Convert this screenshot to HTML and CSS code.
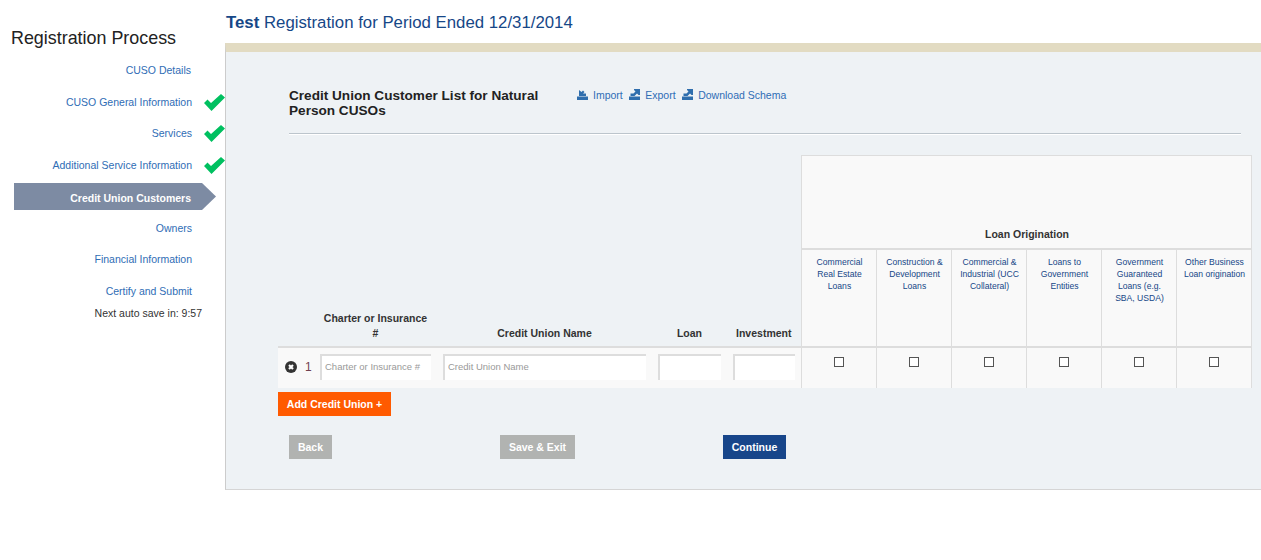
FILE: index.html
```html
<!DOCTYPE html>
<html lang="en">
<head>
    <meta charset="UTF-8">
    <title>Credit Union Customers</title>
    <link rel="stylesheet" href="styles.css">
</head>
<body>
    <div class="page">
        <div class="sidebar">
            <h2 class="side-title">Registration Process</h2>
            <ul class="steps">
                <li class="step step-first"><a href="#">CUSO Details</a></li>
                <li class="step done"><a href="#">CUSO General Information</a>
                    <svg class="check" viewBox="0 0 21 17"><path d="M0 9 L3.500 5.500 L7 9 L17 0 L21 3.500 L7.500 17 Z"/></svg></li>
                <li class="step done"><a href="#">Services</a>
                    <svg class="check" viewBox="0 0 21 17"><path d="M0 9 L3.500 5.500 L7 9 L17 0 L21 3.500 L7.500 17 Z"/></svg></li>
                <li class="step done"><a href="#">Additional Service Information</a>
                    <svg class="check" viewBox="0 0 21 17"><path d="M0 9 L3.500 5.500 L7 9 L17 0 L21 3.500 L7.500 17 Z"/></svg></li>
                <li class="step active"><a href="#">Credit Union Customers</a></li>
                <li class="step"><a href="#">Owners</a></li>
                <li class="step"><a href="#">Financial Information</a></li>
                <li class="step"><a href="#">Certify and Submit</a></li>
            </ul>
            <div class="autosave">Next auto save in: 9:57</div>
        </div>

        <div class="main">
            <h1 class="page-title"><b>Test</b> Registration for Period Ended 12/31/2014</h1>
            <div class="panel">
                <div class="panel-head">
                    <h3 class="list-title">Credit Union Customer List for Natural Person CUSOs</h3>
                    <div class="tools">
                        <a href="#"><svg class="tool-icon" viewBox="0 0 11 11"><path d="M0 7.500h11V11H0z"/><path d="M2 7V1l2.500 2L6 1.500 7.500 3 6 4.500h3V7z"/></svg>Import</a>
                        <a href="#"><svg class="tool-icon" viewBox="0 0 11 11"><path d="M0 7.500h11V11H0z"/><path d="M1.500 7V4.500h3L6.500 2.500 5 1V0h6v6H9.500L8 4.500 5.500 7z"/></svg>Export</a>
                        <a href="#"><svg class="tool-icon" viewBox="0 0 11 11"><path d="M0 7.500h11V11H0z"/><path d="M1.500 7V4.500h3L6.500 2.500 5 1V0h6v6H9.500L8 4.500 5.500 7z"/></svg>Download Schema</a>
                    </div>
                </div>

                <table class="grid">
                    <colgroup>
                        <col class="c-num"><col class="c-charter"><col class="c-name"><col class="c-loan"><col class="c-inv">
                        <col class="c-loan"><col class="c-loan"><col class="c-loan"><col class="c-loan"><col class="c-loan"><col class="c-loan">
                    </colgroup>
                    <thead>
                        <tr>
                            <th class="blank" colspan="5"></th>
                            <th class="group" colspan="6">Loan Origination</th>
                        </tr>
                        <tr class="labels">
                            <th></th>
                            <th class="col-head">Charter or Insurance #</th>
                            <th class="col-head">Credit Union Name</th>
                            <th class="col-head">Loan</th>
                            <th class="col-head">Investment</th>
                            <th class="sub">Commercial Real Estate Loans</th>
                            <th class="sub">Construction &amp; Development Loans</th>
                            <th class="sub">Commercial &amp; Industrial (UCC Collateral)</th>
                            <th class="sub">Loans to Government Entities</th>
                            <th class="sub">Government Guaranteed Loans (e.g. SBA, USDA)</th>
                            <th class="sub">Other Business Loan origination</th>
                        </tr>
                    </thead>
                    <tbody>
                        <tr class="row">
                            <td class="num-cell">
                                <svg class="remove" viewBox="0 0 12 12"><circle cx="6" cy="6" r="6"/><path d="M4 4l4 4M8 4L4 8"/></svg><span class="num">1</span>
                            </td>
                            <td><input class="field" placeholder="Charter or Insurance #"></td>
                            <td><input class="field" placeholder="Credit Union Name"></td>
                            <td><input class="field"></td>
                            <td><input class="field"></td>
                            <td class="box"><input type="checkbox"></td>
                            <td class="box"><input type="checkbox"></td>
                            <td class="box"><input type="checkbox"></td>
                            <td class="box"><input type="checkbox"></td>
                            <td class="box"><input type="checkbox"></td>
                            <td class="box"><input type="checkbox"></td>
                        </tr>
                    </tbody>
                </table>

                <button class="btn btn-add">Add Credit Union +</button>

                <div class="actions">
                    <button class="btn btn-grey">Back</button>
                    <button class="btn btn-grey">Save &amp; Exit</button>
                    <button class="btn btn-blue">Continue</button>
                </div>
            </div>
        </div>
    </div>
</body>
</html>
```

FILE: styles.css
```css
* {
    box-sizing: border-box;
}

body {
    margin: 0;
    font-family: "Liberation Sans", Arial, sans-serif;
    font-size: 10.500px;
    color: #333;
    background-color: #fff;
}

a {
    color: #2f6db5;
    text-decoration: none;
}

.page {
    display: flex;
    align-items: flex-start;
}

/* left column */
.sidebar {
    width: 225px;
    flex-shrink: 0;
    padding-top: 28px;
}

.side-title {
    margin: 0 0 0 11px;
    font-size: 17.900px;
    line-height: 20px;
    font-weight: normal;
    color: #222;
}

.steps {
    list-style: none;
    margin: 7px 0 0;
    padding: 0;
}

.step {
    height: 31.500px;
    padding-right: 33px;
    text-align: right;
    line-height: 31px;
    position: relative;
}

.step-first {
    padding-right: 34px;
}

.check {
    position: absolute;
    left: 204px;
    top: 7px;
    width: 21px;
    height: 17px;
    fill: #00c060;
}

.step.active {
    height: 29.750px;
    margin: 2px 9px 0 14px;
    padding-right: 25px;
    line-height: 30px;
    background-color: #7d8ba3;
    clip-path: polygon(0 0, 188px 0, 202px 13.500px, 188px 27px, 0 27px);
}

.step.active a {
    color: #fff;
    font-weight: bold;
}

.autosave {
    margin-top: -0.500px;
    padding-right: 23px;
    text-align: right;
    color: #333;
}

/* main column */
.main {
    flex: 1;
    min-width: 0;
}

.page-title {
    margin: 0;
    height: 43px;
    padding: 13px 0 0 1px;
    font-size: 16.800px;
    line-height: 20px;
    font-weight: normal;
    color: #164787;
}

.panel {
    height: 447px;
    padding: 0 0 0 52px;
    background-color: #eef2f5;
    border-top: 9px solid #e2dbc2;
    border-left: 1px solid #ccc;
    border-bottom: 1px solid #d5d5d5;
}

.panel-head {
    display: flex;
    margin: 0 20px 21px 11px;
    padding: 36px 0 0;
    height: 82px;
    border-bottom: 1px solid #bcc5cc;
    box-shadow: 0 1px 0 #fff;
}

.list-title {
    width: 262px;
    margin: 0;
    font-size: 13.600px;
    line-height: 15px;
    font-weight: bold;
    color: #222;
}

.tools {
    display: flex;
    margin-left: 26px;
    line-height: 15px;
}

.tools a {
    margin-right: 6.500px;
}

.tool-icon {
    width: 11px;
    height: 11px;
    margin-right: 5px;
    vertical-align: -1px;
    fill: #2f6ead;
}

/* table */
.grid {
    width: 973px;
    table-layout: fixed;
    border-collapse: collapse;
}

.c-num { width: 36px; }
.c-charter { width: 123px; }
.c-name { width: 215px; }
.c-loan { width: 75px; }
.c-inv { width: 74px; }

.blank {
    height: 93px;
}

.group {
    height: 93px;
    padding: 0 0 8px 2px;
    vertical-align: bottom;
    text-align: center;
    font-size: 10.500px;
    color: #333;
    background-color: #f9f9f9;
    border: 1px solid #ddd;
    border-bottom-width: 2px;
}

.labels th {
    height: 98px;
    vertical-align: bottom;
    font-size: 10.500px;
}

.col-head {
    padding: 0 6px 5px;
    line-height: 15px;
    color: #333;
}

.labels .sub {
    padding: 6px 4px 0 6px;
    vertical-align: top;
    font-size: 8.600px;
    line-height: 12px;
    font-weight: normal;
    color: #164787;
    background-color: #f9f9f9;
    border: 1px solid #ddd;
    border-bottom-width: 2px;
}

.row {
    height: 41px;
    background-color: #f9f9f9;
}

.row td {
    padding: 0 6px 2px;
    border-top: 2px solid #ddd;
}

.row .num-cell {
    padding: 0 0 2px 7px;
    white-space: nowrap;
}

.remove {
    width: 12px;
    height: 12px;
    vertical-align: -2px;
}

.remove circle {
    fill: #333;
}

.remove path {
    fill: none;
    stroke: #fff;
    stroke-width: 2.200;
}

.num {
    margin-left: 8px;
    font-size: 12px;
    color: #704050;
}

.field {
    display: block;
    width: 100%;
    height: 26px;
    padding: 0 3px 2px;
    font-family: inherit;
    font-size: 9.500px;
    color: #333;
    background-color: #fff;
    border: 0;
    border-top: 2px solid #ddd;
    border-left: 2px solid #ddd;
    outline: 0;
}

.field::placeholder {
    color: #999;
    opacity: 1;
}

.row .box {
    padding: 9px 0 0;
    vertical-align: top;
    text-align: center;
    border-left: 1px solid #ddd;
    border-right: 1px solid #ddd;
}

.box input {
    display: block;
    width: 10px;
    height: 10px;
    margin: 0 auto;
    appearance: none;
    background-color: #fff;
    border: 1px solid #555;
}

/* buttons */
.btn {
    display: block;
    height: 24px;
    padding: 0;
    font-family: inherit;
    font-size: 10.500px;
    font-weight: bold;
    color: #fff;
    border: 0;
}

.btn-add {
    width: 113px;
    margin-top: 4px;
    background-color: #ff5a00;
}

.actions {
    display: flex;
    margin: 19px 0 0 11px;
}

.btn-grey {
    background-color: #b1b3b1;
    width: 43px;
}

.btn-grey + .btn-grey {
    width: 75px;
    margin-left: 168px;
}

.btn-blue {
    width: 63px;
    margin-left: 148px;
    background-color: #17468a;
}
```
